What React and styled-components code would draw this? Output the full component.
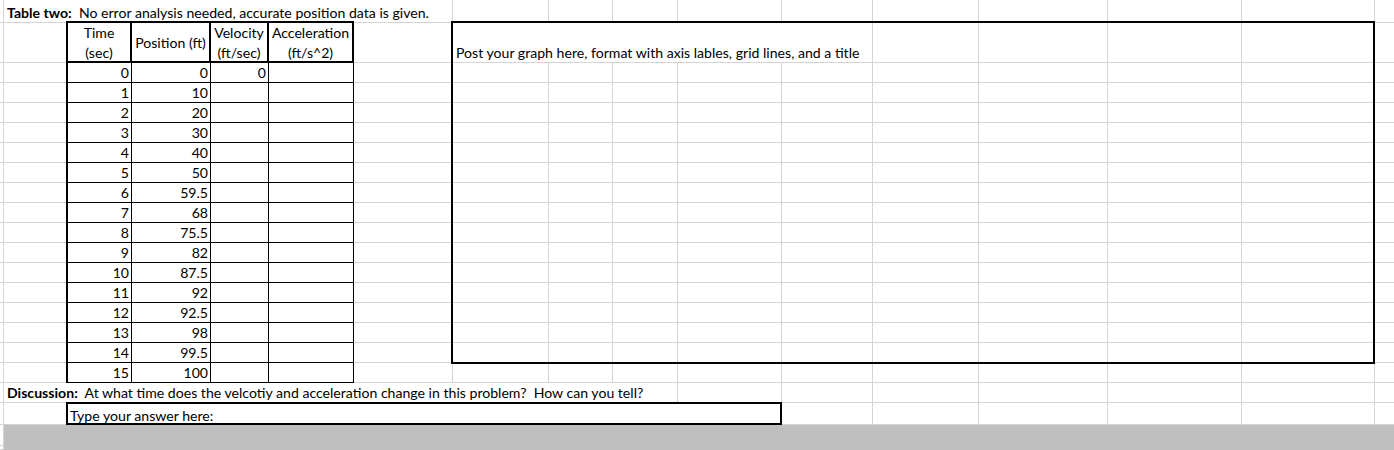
import React from 'react';
import styled, { createGlobalStyle } from 'styled-components';

const GRID = '#d4d4d4';

// column widths in px: row-header stub, A..O, then P running off the edge
const COLS = [4, 64, 64, 79, 58, 85, 99, 96, 64, 65, 104, 91, 106, 129, 134, 133, 60];
// title, header, 16 data rows, discussion, answer, two bottom bands
const ROWS = [23, 40, ...Array(16).fill(20), 20, 22, 21, 4];

const POSITIONS = ['0', '10', '20', '30', '40', '50', '59.5', '68', '75.5', '82', '87.5', '92', '92.5', '98', '99.5', '100'];

const GlobalStyle = createGlobalStyle`
  *, *::before, *::after { box-sizing: border-box; }
  html, body {
    margin: 0;
    padding: 0;
    background: #fff;
    overflow: hidden;
  }
  body {
    font-family: Lato, "Open Sans", sans-serif;
    font-size: 14.1px;
    color: #000;
  }
`;

const Sheet = styled.div`
  display: grid;
  grid-template-columns: ${COLS.map((w) => `${w}px`).join(' ')};
  grid-template-rows: ${ROWS.map((h) => `${h}px`).join(' ')};
  width: 1394px;
  height: 450px;
  overflow: hidden;
`;

const Stub = styled.div`
  grid-column: 1;
  grid-row: ${(p) => p.$r};
  border-right: 1px solid ${GRID};
  border-bottom: 1px solid ${GRID};
`;

const Cell = styled.div`
  grid-column: ${(p) => p.$c} / span ${(p) => p.$span || 1};
  grid-row: ${(p) => p.$r};
  border-right: 1px solid ${GRID};
  border-bottom: 1px solid ${GRID};
  display: flex;
  align-items: flex-end;
  padding: 0 3px 2px;
  line-height: 15px;
  white-space: pre;
  min-width: 0;
`;

const Label = styled.span`
  font-weight: 700;
`;

const DataTable = styled.div`
  grid-column: 3 / span 4;
  grid-row: 2 / span 17;
  margin: -2px 0 0 -2px;
  border-top: 2px solid #000;
  border-left: 2px solid #000;
  background: #fff;
  display: grid;
  grid-template-columns: 64px 79px 58px 85px;
  grid-template-rows: 40px repeat(16, 20px);
`;

const HeadCell = styled.div`
  border-right: 2px solid #000;
  border-bottom: 2px solid #000;
  display: flex;
  flex-direction: column;
  align-items: center;
  justify-content: center;
  padding-top: 2px;
  line-height: 20px;
  white-space: nowrap;
  text-align: center;
`;

const NumCell = styled.div`
  border-right: 1px solid #000;
  border-bottom: 1px solid #000;
  display: flex;
  align-items: flex-end;
  justify-content: flex-end;
  padding: 0 2px 2px;
  line-height: 15px;
`;

const GraphFrame = styled.div`
  grid-column: 8 / span 9;
  grid-row: 2 / span 16;
  margin: -2px 0 -1px -2px;
  border: 2px solid #000;
`;

const AnswerBox = styled.div`
  grid-column: 3 / span 9;
  grid-row: 20;
  margin: -1px 0 0 -2px;
  border: 2px solid #000;
  background: #fff;
  display: flex;
  align-items: flex-end;
  padding: 0 2px;
  line-height: 15px;
`;

const Scrollbar = styled.div`
  grid-column: 2 / span 16;
  grid-row: 21 / span 2;
  background: #bfbfbf;
`;

// which background cells each sheet row has: [startCol, span, content]
const rowCells = (r) => {
  const singles = (from, to) => {
    const out = [];
    for (let c = from; c <= to; c += 1) out.push([c, 1, null]);
    return out;
  };
  if (r === 1) {
    return [
      [2, 6, (
        <>
          <Label>Table two:</Label>
          {'  No error analysis needed, accurate position data is given.'}
        </>
      )],
      ...singles(8, 17),
    ];
  }
  if (r === 2) {
    return [
      ...singles(2, 7),
      [8, 5, 'Post your graph here, format with axis lables, grid lines, and a title'],
      ...singles(13, 17),
    ];
  }
  if (r === 19) {
    return [
      [2, 9, (
        <>
          <Label>Discussion:</Label>
          {'  At what time does the velcotiy and acceleration change in this problem?  How can you tell?'}
        </>
      )],
      ...singles(11, 17),
    ];
  }
  return singles(2, 17);
};

const HEADERS = [
  ['Time', '(sec)'],
  ['Position (ft)'],
  ['Velocity', '(ft/sec)'],
  ['Acceleration', '(ft/s^2)'],
];

const App = () => {
  const sheetRows = Array.from({ length: 20 }, (_, i) => i + 1);

  return (
    <>
      <GlobalStyle />
      <Sheet>
        {sheetRows.map((r) => (
          <React.Fragment key={r}>
            <Stub $r={r} />
            {rowCells(r).map(([c, span, content]) => (
              <Cell key={c} $c={c} $r={r} $span={span}>
                {content}
              </Cell>
            ))}
          </React.Fragment>
        ))}
        <Stub $r={21} />
        <Stub $r={22} />

        <DataTable>
          {HEADERS.map((lines) => (
            <HeadCell key={lines[0]}>
              {lines.map((l) => (
                <span key={l}>{l}</span>
              ))}
            </HeadCell>
          ))}
          {POSITIONS.map((pos, t) => (
            <React.Fragment key={t}>
              <NumCell>{t}</NumCell>
              <NumCell>{pos}</NumCell>
              <NumCell>{t === 0 ? '0' : ''}</NumCell>
              <NumCell />
            </React.Fragment>
          ))}
        </DataTable>

        <GraphFrame />
        <AnswerBox>Type your answer here:</AnswerBox>
        <Scrollbar />
      </Sheet>
    </>
  );
};

export default App;
